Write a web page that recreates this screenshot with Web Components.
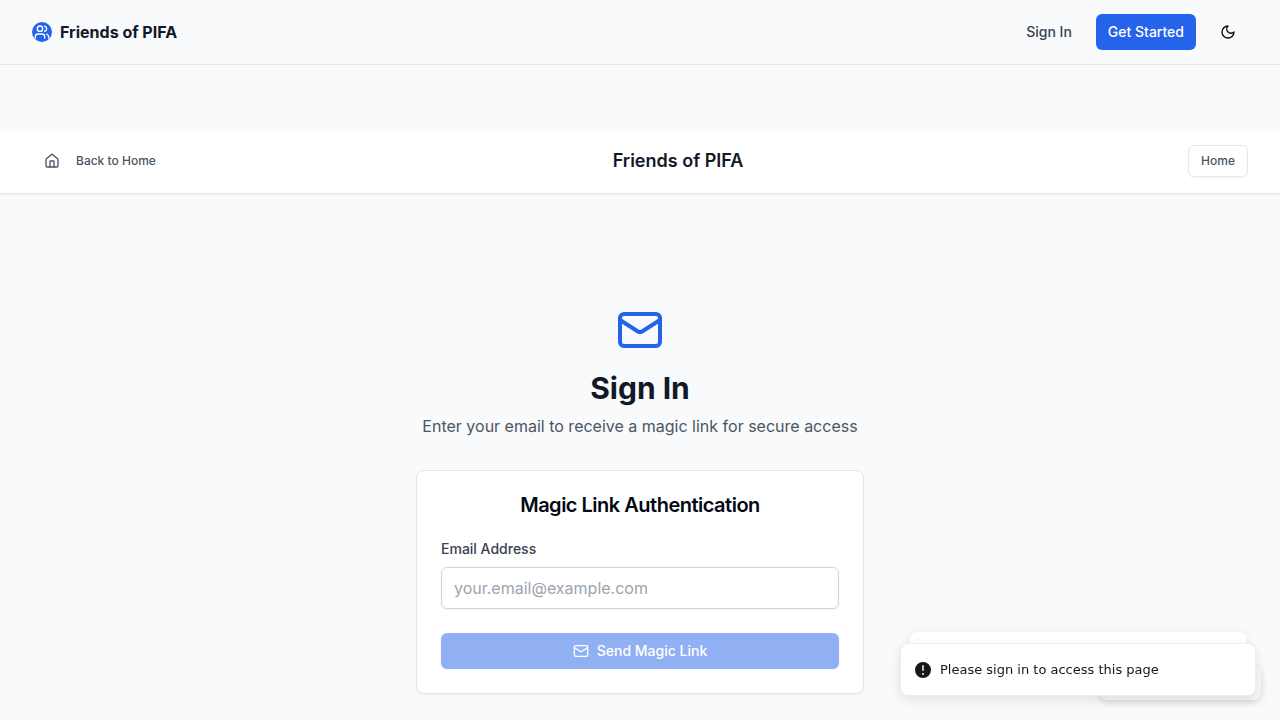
<!DOCTYPE html>
<html lang="en">
<head>
<meta charset="utf-8">
<meta name="viewport" content="width=device-width, initial-scale=1">
<title>Sign In - Friends of PIFA</title>
<style>
  body { margin: 0; background: #f9fafc; color: #111827; font: 14px/20px Inter, "Liberation Sans", sans-serif; }
</style>
</head>
<body>
<site-nav></site-nav>
<page-header>Friends of PIFA</page-header>
<sign-in-page>
  <auth-card heading="Magic Link Authentication"></auth-card>
</sign-in-page>
<toast-stack>Please sign in to access this page</toast-stack>

<script>
const define = (name, html, setup) => {
  const template = document.createElement('template');
  template.innerHTML = '<style>*{box-sizing:border-box}</style>' + html;
  customElements.define(name, class extends HTMLElement {
    constructor() {
      super();
      this.attachShadow({ mode: 'open' }).append(template.content.cloneNode(true));
    }
    connectedCallback() { if (setup) setup(this, this.shadowRoot); }
  });
};

const icons = {
  users: '<path d="M16 21v-2a4 4 0 0 0-4-4H6a4 4 0 0 0-4 4v2"/><circle cx="9" cy="7" r="4"/><path d="M22 21v-2a4 4 0 0 0-3-3.87"/><path d="M16 3.13a4 4 0 0 1 0 7.75"/>',
  moon: '<path d="M12 3a6 6 0 0 0 9 9 9 9 0 1 1-9-9Z"/>',
  house: '<path d="M15 21v-8a1 1 0 0 0-1-1h-4a1 1 0 0 0-1 1v8"/><path d="M3 10a2 2 0 0 1 .709-1.528l7-5.999a2 2 0 0 1 2.582 0l7 5.999A2 2 0 0 1 21 10v9a2 2 0 0 1-2 2H5a2 2 0 0 1-2-2z"/>',
  mail: '<path d="m22 7-8.991 5.727a2 2 0 0 1-2.009 0L2 7"/><rect width="20" height="16" x="2" y="4" rx="2"/>'
};

define('line-icon', `
  <style>
    :host { display: block; flex: none; width: 16px; height: 16px; }
    svg { display: block; width: 100%; height: 100%; fill: none; stroke: currentColor; stroke-width: 2; stroke-linecap: round; stroke-linejoin: round; }
  </style>
  <svg viewBox="0 0 24 24" aria-hidden="true"></svg>`,
  (host, root) => { root.querySelector('svg').innerHTML = icons[host.getAttribute('name')]; });

define('site-nav', `
  <style>
    :host { display: block; border-bottom: 1px solid #e5e7eb; }
    nav { display: flex; align-items: center; justify-content: space-between; height: 64px; padding: 0 32px; }
    a { color: inherit; text-decoration: none; }
    .brand { display: flex; align-items: center; gap: 8px; font-size: 16px; line-height: 24px; font-weight: 700; }
    .logo { display: grid; place-items: center; width: 20px; height: 20px; border-radius: 50%; background: #2563eb; color: #fff; }
    .actions { display: flex; align-items: center; gap: 12px; font-weight: 500; }
    .link { padding: 8px 12px; color: #374151; border-radius: 6px; }
    .primary { background: #2563eb; color: #fff; }
    button { display: grid; place-items: center; width: 40px; height: 40px; padding: 0; border: 0; background: none; color: #09090b; }
  </style>
  <nav>
    <a class="brand" href="#"><span class="logo"><line-icon name="users"></line-icon></span>Friends of PIFA</a>
    <div class="actions">
      <a class="link" href="#">Sign In</a>
      <a class="link primary" href="#">Get Started</a>
      <button type="button" aria-label="Toggle theme"><line-icon name="moon"></line-icon></button>
    </div>
  </nav>`);

define('page-header', `
  <style>
    :host { display: block; margin-top: 64px; background: #fff; border-bottom: 1px solid #e5e7eb; box-shadow: 0 1px 2px rgba(0,0,0,.05); }
    header { display: flex; align-items: center; justify-content: space-between; height: 64px; padding: 0 32px; }
    a { display: flex; align-items: center; gap: 16px; height: 32px; padding: 0 12px; border-radius: 6px; color: #4b5563; font-size: 12px; line-height: 16px; font-weight: 500; text-decoration: none; }
    .outline { border: 1px solid #e5e7eb; box-shadow: 0 1px 2px rgba(0,0,0,.05); }
    h1 { margin: 0; font-size: 18px; line-height: 28px; font-weight: 600; }
  </style>
  <header>
    <a href="#"><line-icon name="house"></line-icon>Back to Home</a>
    <h1><slot></slot></h1>
    <a class="outline" href="#">Home</a>
  </header>`);

define('sign-in-page', `
  <style>
    :host { display: block; padding: 112px 16px 24px; }
    main { display: flex; flex-direction: column; align-items: center; max-width: 448px; margin: 0 auto; text-align: center; }
    line-icon { width: 48px; height: 48px; margin-bottom: 16px; color: #2563eb; }
    h2 { margin: 0 0 8px; font-size: 30px; line-height: 36px; font-weight: 700; }
    p { margin: 0 0 32px; color: #4b5563; font-size: 16px; line-height: 24px; }
    slot { display: block; align-self: stretch; }
  </style>
  <main>
    <line-icon name="mail"></line-icon>
    <h2>Sign In</h2>
    <p>Enter your email to receive a magic link for secure access</p>
    <slot></slot>
  </main>`);

define('auth-card', `
  <style>
    :host { display: block; padding: 24px; background: #fff; border: 1px solid #e5e7eb; border-radius: 8px; box-shadow: 0 1px 2px rgba(0,0,0,.05); text-align: left; }
    h3 { margin: 0 0 24px; color: #030712; font-size: 20px; line-height: 20px; font-weight: 600; letter-spacing: -0.025em; text-align: center; }
    form { display: flex; flex-direction: column; }
    label { margin-bottom: 8px; color: #374151; font-weight: 500; }
    input { width: 100%; height: 42px; margin: 0 0 24px; padding: 8px 12px; border: 1px solid #d1d5db; border-radius: 6px; background: #fff; color: #111827; font: inherit; font-size: 16px; line-height: 24px; box-shadow: 0 1px 2px rgba(0,0,0,.05); outline: 0; }
    input::placeholder { color: #9ca3af; opacity: 1; }
    button { display: flex; align-items: center; justify-content: center; gap: 8px; height: 36px; padding: 0 16px; border: 0; border-radius: 6px; background: #2563eb; color: #fff; font: inherit; font-weight: 500; box-shadow: 0 1px 2px rgba(0,0,0,.05); }
    button:disabled { opacity: .5; }
  </style>
  <h3></h3>
  <form>
    <label for="email">Email Address</label>
    <input id="email" type="email" placeholder="your.email@example.com">
    <button type="submit" disabled><line-icon name="mail"></line-icon>Send Magic Link</button>
  </form>`,
  (host, root) => { root.querySelector('h3').textContent = host.getAttribute('heading'); });

define('toast-stack', `
  <style>
    :host { position: fixed; right: 24px; bottom: 24px; width: 356px; max-width: calc(100vw - 48px); font: 500 13px/19px "DejaVu Sans", sans-serif; color: #171717; }
    .box { border: 1px solid #ededed; border-radius: 8px; background: #fff; box-shadow: 0 4px 12px rgba(0,0,0,.1); }
    .status { position: absolute; right: -5px; bottom: -4px; width: 161px; height: 34px; border: 0; background: #f8f8f8; box-shadow: 0 2px 8px rgba(0,0,0,.15); }
    .behind { position: absolute; top: -12px; left: 9px; right: 9px; height: 51px; border-color: #f4f4f4; }
    .front { position: relative; display: flex; align-items: center; gap: 7px; padding: 16px 12px; }
    svg { flex: none; width: 20px; height: 20px; margin: -1px 0; fill: currentColor; }
  </style>
  <div class="box status"></div>
  <div class="box behind"></div>
  <div class="box front" role="status">
    <svg viewBox="0 0 20 20" aria-hidden="true"><path fill-rule="evenodd" d="M18 10a8 8 0 1 1-16 0 8 8 0 0 1 16 0Zm-8-5a.75.75 0 0 1 .75.75v4.5a.75.75 0 0 1-1.5 0v-4.5A.75.75 0 0 1 10 5Zm0 10a1 1 0 1 0 0-2 1 1 0 0 0 0 2Z" clip-rule="evenodd"/></svg>
    <span><slot></slot></span>
  </div>`);
</script>
</body>
</html>
